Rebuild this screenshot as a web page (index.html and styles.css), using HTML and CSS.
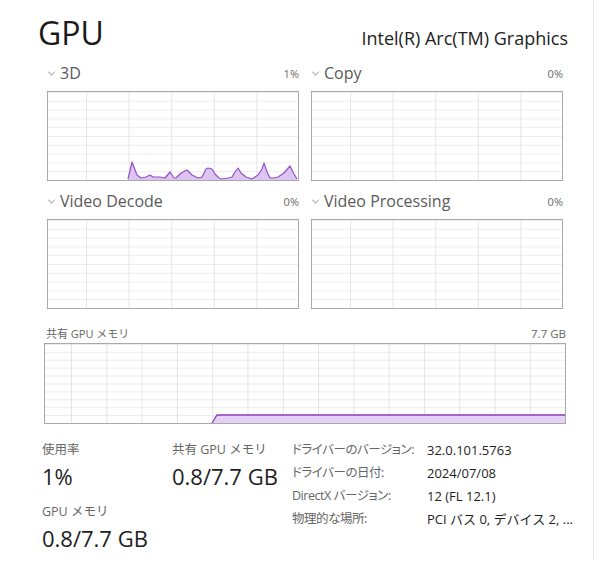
FILE: index.html
```html
<!DOCTYPE html>
<html lang="ja">
<head>
<meta charset="utf-8">
<title>GPU</title>
<link rel="stylesheet" href="styles.css">
</head>
<body>
<div class="page">
  <header class="head">
    <h1 class="title">GPU</h1>
    <div class="model">Intel(R) Arc(TM) Graphics</div>
  </header>

  <div class="engines">
    <section class="engine">
      <div class="eh">
        <svg class="chev" viewBox="0 0 8 5" width="7" height="5"><path d="M0.5 0.8 L4 4.2 L7.5 0.8" fill="none" stroke="#707070" stroke-width="1"/></svg>
        <span class="ename">3D</span>
        <span class="pct">1%</span>
      </div>
      <div class="chart">
        <svg class="plot" viewBox="0 0 250 88" preserveAspectRatio="none">
          <polygon class="fill" points="80,88 80,87 84,70 89,83 93,86 98,85 102,83 105,85 112,85 117,86 122,80 126,86 128,86 133,81 139,78 144,83 150,86 154,85 158,77 160,76 164,77 167,82 171,86 174,87 180,86 184,85 187,80 190,76 193,81 198,85 204,87 210,83 214,77 216,71 219,80 222,86 226,86 230,85 236,81 242,74 246,82 249,87 249,88"/>
          <polyline class="line" points="80,87 84,70 89,83 93,86 98,85 102,83 105,85 112,85 117,86 122,80 126,86 128,86 133,81 139,78 144,83 150,86 154,85 158,77 160,76 164,77 167,82 171,86 174,87 180,86 184,85 187,80 190,76 193,81 198,85 204,87 210,83 214,77 216,71 219,80 222,86 226,86 230,85 236,81 242,74 246,82 249,87"/>
        </svg>
      </div>
    </section>

    <section class="engine">
      <div class="eh">
        <svg class="chev" viewBox="0 0 8 5" width="7" height="5"><path d="M0.5 0.8 L4 4.2 L7.5 0.8" fill="none" stroke="#707070" stroke-width="1"/></svg>
        <span class="ename">Copy</span>
        <span class="pct">0%</span>
      </div>
      <div class="chart"></div>
    </section>

    <section class="engine">
      <div class="eh">
        <svg class="chev" viewBox="0 0 8 5" width="7" height="5"><path d="M0.5 0.8 L4 4.2 L7.5 0.8" fill="none" stroke="#707070" stroke-width="1"/></svg>
        <span class="ename">Video Decode</span>
        <span class="pct">0%</span>
      </div>
      <div class="chart"></div>
    </section>

    <section class="engine">
      <div class="eh">
        <svg class="chev" viewBox="0 0 8 5" width="7" height="5"><path d="M0.5 0.8 L4 4.2 L7.5 0.8" fill="none" stroke="#707070" stroke-width="1"/></svg>
        <span class="ename">Video Processing</span>
        <span class="pct">0%</span>
      </div>
      <div class="chart"></div>
    </section>
  </div>

  <section class="shared">
    <div class="sh">
      <span class="slabel">共有 GPU メモリ</span>
      <span class="smax">7.7 GB</span>
    </div>
    <div class="chart memchart">
      <svg class="plot" viewBox="0 0 520 79" preserveAspectRatio="none">
        <polygon class="mfill" points="167,79 172,71 520,71 520,79"/>
        <polyline class="mline" points="167,79 172,71 520,71"/>
      </svg>
    </div>
  </section>

  <div class="stats">
    <div class="live">
      <div class="stat">
        <div class="label">使用率</div>
        <div class="value">1%</div>
      </div>
      <div class="stat">
        <div class="label">共有 GPU メモリ</div>
        <div class="value">0.8/7.7 GB</div>
      </div>
      <div class="stat">
        <div class="label">GPU メモリ</div>
        <div class="value">0.8/7.7 GB</div>
      </div>
    </div>
    <dl class="info">
      <dt>ドライバーのバージョン:</dt><dd>32.0.101.5763</dd>
      <dt>ドライバーの日付:</dt><dd>2024/07/08</dd>
      <dt>DirectX バージョン:</dt><dd>12 (FL 12.1)</dd>
      <dt>物理的な場所:</dt><dd>PCI バス 0, デバイス 2, ...</dd>
    </dl>
  </div>
</div>
</body>
</html>
```

FILE: styles.css
```css
* { box-sizing: border-box; }

html, body {
  margin: 0;
  padding: 0;
  background: #ffffff;
}

body {
  font-family: "Open Sans", "Noto Sans", "Noto Sans CJK JP", sans-serif;
  color: #1f1f1f;
}

.page {
  width: 594px;
  min-height: 561px;
  padding: 13px 25px 0 38px;
  border-right: 1px solid #ececec;
}

/* header */
.head {
  display: flex;
  align-items: baseline;
  justify-content: space-between;
}

.title {
  margin: 0;
  font-size: 32px;
  font-weight: 400;
  line-height: 40px;
  color: #1a1a1a;
}

.model {
  font-size: 18px;
  line-height: 24px;
  color: #222222;
}

/* engine charts */
.engines {
  margin: 8px 0 0 9px;
  display: grid;
  grid-template-columns: 252px 252px;
  column-gap: 12px;
  row-gap: 8px;
}

.eh {
  display: flex;
  align-items: center;
  height: 24px;
  margin-bottom: 6px;
  padding-left: 1px;
}

.chev {
  display: block;
  flex: none;
  margin-right: 5px;
  margin-top: 1px;
}

.ename {
  font-size: 16px;
  line-height: 24px;
  color: #5a5a5a;
}

.pct {
  margin-left: auto;
  font-size: 11px;
  line-height: 24px;
  color: #6a6a6a;
  position: relative;
  top: 1px;
}

.chart {
  height: 90px;
  border: 1px solid #a9a9a9;
  background-color: #ffffff;
  background-image:
    linear-gradient(to right, #e4e4e4 1px, transparent 1px),
    linear-gradient(to bottom, #ededed 1px, transparent 1px);
  background-size: 42.6px 100%, 100% 8.8px;
  background-position: 38px 0, 0 8.8px;
}

.plot {
  display: block;
  width: 100%;
  height: 100%;
}

.fill { fill: #dcc6f1; }
.line {
  fill: none;
  stroke: #9650c8;
  stroke-width: 1.2;
  stroke-linejoin: round;
}

/* shared memory */
.shared {
  margin: 14px 0 0 6px;
  width: 522px;
}

.sh {
  display: flex;
  align-items: center;
  height: 20px;
}

.slabel {
  font-size: 11px;
  color: #666666;
  padding-left: 2px;
}

.smax {
  margin-left: auto;
  font-size: 11.5px;
  color: #666666;
}

.memchart {
  height: 81px;
  background-size: 35.3px 100%, 100% 7.9px;
  background-position: 26px 0, 0 7.9px;
}

.mfill { fill: #e5d0f6; }
.mline {
  fill: none;
  stroke: #8a3db8;
  stroke-width: 1.3;
}

/* stats */
.stats {
  margin: 14px 0 0 4px;
  display: flex;
}

.live {
  flex: none;
  width: 250px;
  padding-top: 3px;
  display: grid;
  grid-template-columns: 130px 120px;
  row-gap: 13px;
}

.label {
  font-size: 12.5px;
  line-height: 18px;
  color: #666666;
}

.value {
  margin-top: 3px;
  font-size: 22px;
  line-height: 28px;
  color: #1e1e1e;
}

.info {
  margin: 0;
  display: grid;
  grid-template-columns: 135px auto;
  grid-auto-rows: 23px;
  align-items: center;
  font-size: 13px;
  line-height: 18px;
}

.info dt {
  color: #666666;
  font-size: 12.5px;
  letter-spacing: -0.45px;
  font-feature-settings: "palt";
  white-space: nowrap;
}

.info dd {
  margin: 0;
  color: #1e1e1e;
  white-space: nowrap;
}
```
